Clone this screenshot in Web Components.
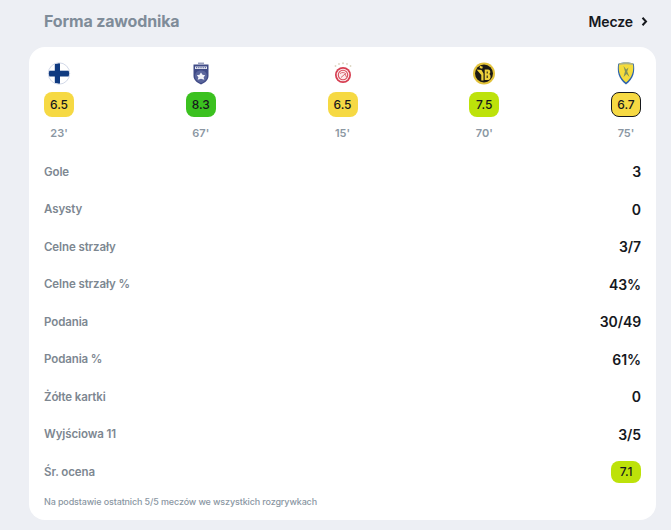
<!DOCTYPE html>
<html lang="pl">
<head>
<meta charset="utf-8">
<title>Forma zawodnika</title>
<style>
  html, body { margin: 0; height: 100%; background: #edeff4; }
  body { font-family: "Inter", "Noto Sans", sans-serif; }
</style>
</head>
<body>
<player-form>
  <match-col slot="matches" rating="6.5" minutes="23'" badge="fin"></match-col>
  <match-col slot="matches" rating="8.3" minutes="67'" badge="shield"></match-col>
  <match-col slot="matches" rating="6.5" minutes="15'" badge="oly"></match-col>
  <match-col slot="matches" rating="7.5" minutes="70'" badge="yb"></match-col>
  <match-col slot="matches" rating="6.7" minutes="75'" badge="pan" outlined></match-col>

  <stat-row label="Gole">3</stat-row>
  <stat-row label="Asysty">0</stat-row>
  <stat-row label="Celne strzały">3/7</stat-row>
  <stat-row label="Celne strzały %">43%</stat-row>
  <stat-row label="Podania">30/49</stat-row>
  <stat-row label="Podania %">61%</stat-row>
  <stat-row label="Żółte kartki">0</stat-row>
  <stat-row label="Wyjściowa 11">3/5</stat-row>
  <stat-row label="Śr. ocena"><rating-badge value="7.1" small></rating-badge></stat-row>
</player-form>

<script>
const BADGES = {
  fin: `<svg viewBox="0 0 24 24" width="24" height="24">
      <clipPath id="c"><circle cx="12" cy="12.500" r="10.500"/></clipPath>
      <circle cx="12" cy="12.500" r="10.500" fill="#fff"/>
      <g clip-path="url(#c)" fill="#0f3a80">
        <rect x="7.800" y="1" width="5.200" height="23"/>
        <rect x="1" y="9.700" width="22" height="5.800"/>
      </g>
      <circle cx="12" cy="12.500" r="10.700" fill="none" stroke="#d3d9e8" stroke-width="1"/>
    </svg>`,
  shield: `<svg viewBox="0 0 24 24" width="24" height="24">
      <path d="M9 1.500h6v1.500H9z" fill="#9aa0bf"/>
      <path d="M4.500 3.500h15v11.500c0 4-3.800 7-7.500 8.500-3.700-1.500-7.500-4.500-7.500-8.500z" fill="#3f4a86"/>
      <path d="M6 5.500h12v2.500H6z" fill="#e6e8f2"/>
      <path d="M7 6.700h10" stroke="#4a5590" stroke-width="1" stroke-dasharray="1 .8"/>
      <path d="M6 15.500c0-4 2.500-6 6-6s6 2 6 6c0 3-3 5.500-6 6.500-3-1-6-3.500-6-6.500z" fill="#5a659c"/>
      <path d="M12 11.500l1.500 2.300 2.700.4-1.600 2 .7 2.600-3.300-1-3.300 1 .7-2.600-1.600-2 2.700-.4z" fill="#f2f3f9"/>
    </svg>`,
  oly: `<svg viewBox="0 0 24 24" width="24" height="24">
      <g fill="#ddd6c2"><circle cx="4.500" cy="5" r=".9"/><circle cx="8" cy="3" r=".9"/><circle cx="12" cy="2.300" r="1"/><circle cx="16" cy="3" r=".9"/><circle cx="19.500" cy="5" r=".9"/></g>
      <circle cx="12" cy="14" r="8" fill="#d63d50"/>
      <circle cx="12" cy="14" r="6.300" fill="#fbeaec"/>
      <circle cx="12" cy="14" r="4.700" fill="none" stroke="#d9505f" stroke-width="1.100"/>
      <path d="M9 12.500c2-1.500 4.500-1.200 6 .5M10 16.500l4-3.500 1.500 3" fill="none" stroke="#dc6672" stroke-width="1"/>
    </svg>`,
  yb: `<svg viewBox="0 0 24 24" width="24" height="24">
      <circle cx="12" cy="12.500" r="11" fill="#e2c23a"/>
      <circle cx="12" cy="12.500" r="9" fill="#1c1a14"/>
      <path d="M4.500 8.500l5 .5 2 3.500v7h-2.200v-5.500z" fill="#efd13b"/>
      <path d="M12.700 8.500h3.500c2.300 0 2.800 3.500 1 4.500 2.200 1 1.700 6-1 6h-3.500z" fill="#efd13b"/>
      <path d="M14.700 10.500h1v2h-1zM14.700 14.500h1v2.500h-1z" fill="#1c1a14"/>
      <path d="M8 4.800l2.800 1-.6 1.900-2.600-.8z" fill="#efd13b"/>
    </svg>`,
  pan: `<svg viewBox="0 0 24 24" width="24" height="24">
      <path d="M4.200 2.800C8 1.200 16 1.200 19.800 2.800c1.200 7.200.2 15-7.800 20.700C4 17.800 3 10 4.200 2.800z" fill="#2b62ad"/>
      <path d="M5 2.800c4-1.300 10-1.300 14 0 .9 6.500-.3 13.500-7 18.700C5.300 16.300 4.100 9.300 5 2.800z" fill="#f4dc3c"/>
      <path d="M5 2.800c4-1.300 10-1.300 14 0l.1 1.200C15 2.900 9 2.900 4.900 4z" fill="#a9b08a"/>
      <path d="M9.500 5l2.700 3.500 2.300-2-1.300 4 2.300 5.500-3-3-3 3 1.500-5.500z" fill="#82925a"/>
    </svg>`
};

function colorFor(v) {
  if (v >= 8) return '#3bc11f';
  if (v >= 7) return '#bde20a';
  return '#f6d943';
}

customElements.define('rating-badge', class extends HTMLElement {
  connectedCallback() {
    const v = this.getAttribute('value');
    this.attachShadow({mode: 'open'}).innerHTML = `<style>
      :host {
        display: flex;
        align-items: center;
        justify-content: center;
        box-sizing: border-box;
        width: 30px;
        height: 25px;
        border-radius: 8px;
        background: ${colorFor(+v)};
        color: #16181d;
        font: 500 12px "Inter", sans-serif;
      }
      :host([small]) { height: 22px; }
      :host([outlined]) { border: 1px solid #16181d; }
    </style>${v}`;
  }
});

customElements.define('match-col', class extends HTMLElement {
  connectedCallback() {
    const outlined = this.hasAttribute('outlined') ? 'outlined' : '';
    this.attachShadow({mode: 'open'}).innerHTML = `<style>
      :host {
        display: flex;
        flex-direction: column;
        align-items: center;
        width: 30px;
      }
      .crest { width: 24px; height: 24px; margin-bottom: 7px; }
      .crest svg { display: block; }
      .min {
        margin-top: 9px;
        font: 600 11px/14px "Inter", sans-serif;
        color: #8b97a3;
      }
    </style>
    <div class="crest">${BADGES[this.getAttribute('badge')]}</div>
    <rating-badge value="${this.getAttribute('rating')}" ${outlined}></rating-badge>
    <div class="min">${this.getAttribute('minutes')}</div>`;
  }
});

customElements.define('stat-row', class extends HTMLElement {
  connectedCallback() {
    this.attachShadow({mode: 'open'}).innerHTML = `<style>
      :host {
        display: flex;
        align-items: center;
        justify-content: space-between;
        height: 37.5px;
      }
      .label { font: 600 11.500px "Inter", sans-serif; letter-spacing: -.1px; color: #7d8791; }
      .value { font: 600 14px "Inter", sans-serif; letter-spacing: -.1px; color: #16181d; }
    </style>
    <span class="label">${this.getAttribute('label')}</span>
    <span class="value"><slot></slot></span>`;
  }
});

customElements.define('player-form', class extends HTMLElement {
  connectedCallback() {
    this.attachShadow({mode: 'open'}).innerHTML = `<style>
      :host { display: block; padding: 0 15px 0 29px; }
      header {
        display: flex;
        align-items: center;
        justify-content: space-between;
        height: 47px;
        padding: 0 0 5px 15px;
        box-sizing: border-box;
      }
      h2 { margin: 0; font: 700 16px "Inter", sans-serif; color: #7f8c99; letter-spacing: -.15px; }
      .more { display: flex; align-items: center; gap: 8px; font: 600 14px "Inter", sans-serif; letter-spacing: -.1px; color: #16181d; padding-right: 8px; }
      .card {
        background: #fff;
        border-radius: 16px;
        height: 473px;
        box-sizing: border-box;
        padding: 14px 15px 0;
      }
      .matches { display: flex; justify-content: space-between; height: 92px; }
      .foot { margin-top: 4px; font: 500 9px/14px "Inter", sans-serif; letter-spacing: -.13px; color: #8b97a3; }
    </style>
    <header>
      <h2>Forma zawodnika</h2>
      <span class="more">Mecze
        <svg width="7" height="9" viewBox="0 0 7 9"><path d="M1.500 .8l3.500 3.700-3.500 3.700" fill="none" stroke="#16181d" stroke-width="2"/></svg>
      </span>
    </header>
    <div class="card">
      <div class="matches"><slot name="matches"></slot></div>
      <slot></slot>
      <div class="foot">Na podstawie ostatnich 5/5 meczów we wszystkich rozgrywkach</div>
    </div>`;
  }
});
</script>
</body>
</html>
